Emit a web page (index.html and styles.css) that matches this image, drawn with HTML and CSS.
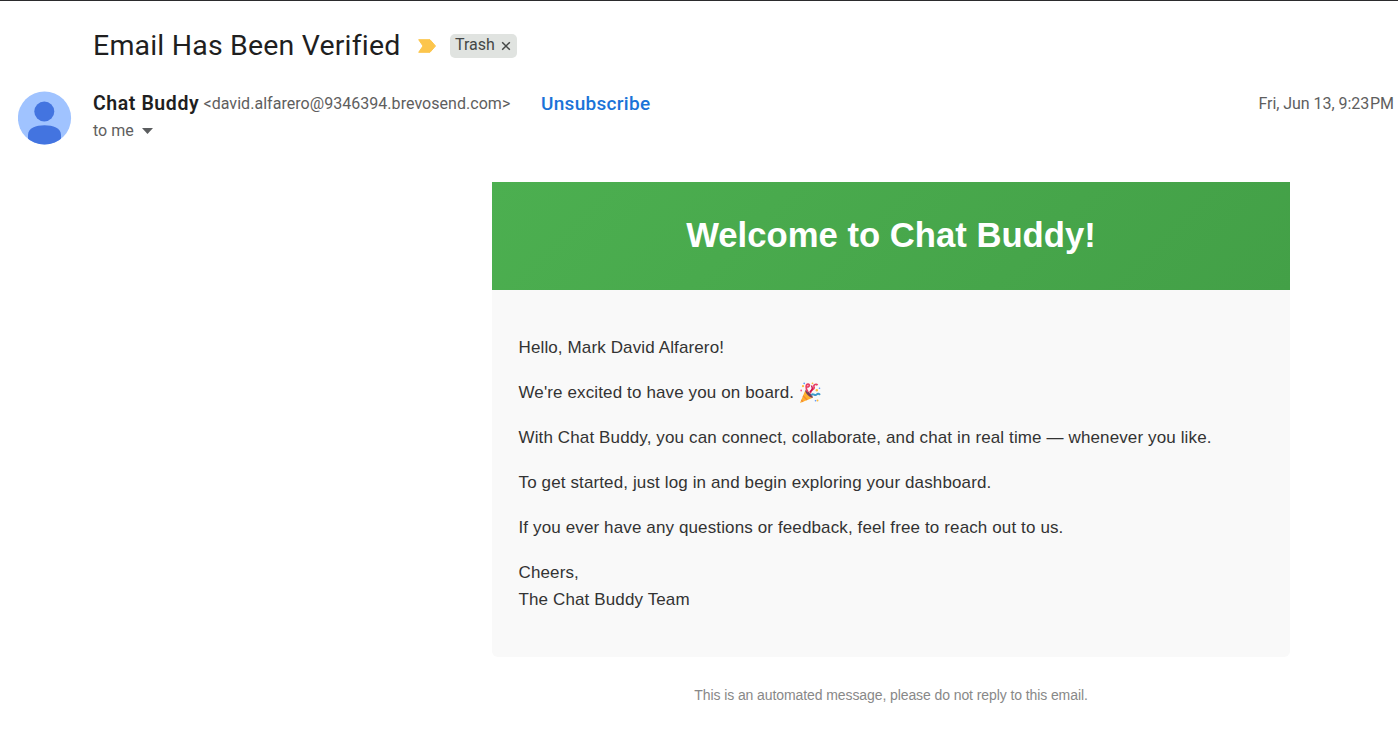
FILE: index.html
```
<!DOCTYPE html>
<html lang="en">
<head>
<meta charset="utf-8">
<title>Email Has Been Verified</title>
<link rel="stylesheet" href="styles.css">
</head>
<body>
<main class="mail">
  <header class="subject">
    <h1 class="subject-title">Email Has Been Verified</h1>
    <svg class="important" width="18" height="14" viewBox="0 0 18 14"><path d="M.7.7H12L17.5 7 12 13.3H.7L5 7Z" fill="#fcc54c" stroke="#fcc54c" stroke-width="1" stroke-linejoin="round"/></svg>
    <span class="label"><span class="label-name">Trash</span>
      <svg width="10" height="10" viewBox="0 0 10 10"><path d="M1.2 1.2 8.8 8.8M8.8 1.2 1.2 8.8" stroke="#444746" stroke-width="1.5"/></svg>
    </span>
  </header>
  <section class="sender">
    <svg class="avatar" width="54" height="54" viewBox="0 0 54 54">
      <defs><clipPath id="disc"><circle cx="26.5" cy="27" r="26.6"/></clipPath></defs>
      <circle cx="26.5" cy="27" r="26.6" fill="#a0c3ff"/>
      <g clip-path="url(#disc)" fill="#4374e0"><circle cx="26.3" cy="20.5" r="10"/><path d="M10 54V44C10 37 18 34.3 26.5 34.3S43 37 43 44V54Z"/></g>
    </svg>
    <div class="who">
      <div class="from">
        <span class="name">Chat Buddy</span>
        <span class="address">&lt;david.alfarero@9346394.brevosend.com&gt;</span>
        <a class="unsubscribe">Unsubscribe</a>
      </div>
      <div class="to"><span>to me</span><svg width="11" height="6" viewBox="0 0 11 6"><path d="M0 0H11L5.5 6Z" fill="#5b5d5f"/></svg></div>
    </div>
    <time class="date">Fri, Jun 13, 9:23<span class="thin"> </span>PM</time>
  </section>
  <article class="message">
    <h2 class="banner">Welcome to Chat Buddy!</h2>
    <div class="body">
      <p>Hello, Mark David Alfarero!</p>
      <p>We're excited to have you on board.<svg class="party" width="22" height="22" viewBox="0 0 22 22">
        <path d="M1 21 6.3 8.3 13.8 15.8Z" fill="#ffb02e"/>
        <path d="M2.3 18 4 19.7M4 13.8 8.2 18" stroke="#f58a35" stroke-width="1.3"/>
        <path d="M6.3 8.3C8 7.5 14.6 14 13.8 15.8 11.5 16.5 5.6 11 6.3 8.3Z" fill="#73405e"/>
        <path d="M9 10C6 6 7 2 9.2 2.2 12 2.6 9.2 6 8 4.6M11.5 11.5C10.5 7 16.5 8 15 4.5 14.2 2.5 17.5 1.5 18.5 3.2" fill="none" stroke="#e83f64" stroke-width="1.7"/>
        <path d="M12.5 13.3C14 10.2 15.7 14.6 17.8 12.4 18.7 11.3 20 11.5 21 12.8" fill="none" stroke="#3e9bc9" stroke-width="2"/>
        <path d="M10.7 9.8C14 8.5 13.5 5.5 12.5 3.5" fill="none" stroke="#ca0b4a" stroke-width="1.4"/>
        <g fill="#ffbd3d"><circle cx="4" cy="4.2" r="1.1"/><circle cx="17.8" cy="8.3" r="1.2"/><circle cx="13.5" cy="1.3" r=".9"/><circle cx="18.5" cy="18.5" r="1"/></g>
        <g fill="#5092ff"><circle cx="5.2" cy="1.4" r=".8"/><circle cx="20.5" cy="6.2" r=".8"/><circle cx="16.5" cy="18.7" r=".8"/></g>
        <circle cx="2.2" cy="8.5" r=".9" fill="#f25b89"/>
      </svg></p>
      <p>With Chat Buddy, you can connect, collaborate, and chat in real time — whenever you like.</p>
      <p>To get started, just log in and begin exploring your dashboard.</p>
      <p>If you ever have any questions or feedback, feel free to reach out to us.</p>
      <p>Cheers,<br>The Chat Buddy Team</p>
    </div>
    <p class="note">This is an automated message, please do not reply to this email.</p>
  </article>
</main>
</body>
</html>
```
FILE: styles.css
```
* { box-sizing: border-box; }
body { margin: 0; background: #fff; font-family: Roboto, sans-serif; }
.mail { height: 738px; overflow: hidden; border-top: 1px solid #2b2b2d; }
.subject { display: flex; align-items: center; height: 88px; padding-left: 93px; }
.subject-title { margin: 0; padding-top: 2px; font: 400 28.5px/36px Roboto, sans-serif; letter-spacing: .18px; color: #1f1f1f; width: 325px; white-space: nowrap; }
.important { margin-right: 14px; margin-top: 1px; }
.label { display: flex; align-items: center; gap: 6px; width: 67px; height: 24px; margin-top: 1px; padding-left: 5px; border-radius: 5px; background: #e0e3e0; color: #444746; font-size: 16px; line-height: 20px; }
.label-name { margin-bottom: 1px; }
.label svg { margin-top: 1px; }
.sender { display: flex; height: 93px; padding: 1px 4px 0 18px; }
.avatar { margin-top: 1px; }
.who { margin-left: 21px; flex: 1; white-space: nowrap; }
.from { display: flex; align-items: center; height: 27px; }
.name { width: 110.5px; font-size: 19.5px; font-weight: 600; letter-spacing: .58px; color: #1f1f1f; }
.address { width: 337.5px; font-size: 16px; letter-spacing: .04px; color: #5e5e5e; }
.unsubscribe { font-size: 19px; font-weight: 500; letter-spacing: .3px; color: #1a73d8; }
.to { display: flex; align-items: center; gap: 8px; height: 27px; font-size: 16px; color: #5e5e5e; }
.date { font-size: 16px; line-height: 27px; color: #5e5e5e; letter-spacing: -.05px; }
.thin { word-spacing: -3px; }
.message { width: 798px; margin-left: 492px; font-family: "Liberation Sans", Arial, sans-serif; }
.banner { height: 108px; margin: 0; background: linear-gradient(135deg, #4caf50, #43a047); color: #fff; font-size: 34.67px; line-height: 107px; text-align: center; }
.body { height: 367px; padding: 44px 26.5px 0; border-radius: 0 0 6px 6px; background: #f9f9f9; color: #333; font-size: 17px; line-height: 27px; letter-spacing: .125px; white-space: nowrap; }
.body p { margin: 0 0 18px; }
.party { margin: -5px 0 -6px 5px; vertical-align: baseline; }
.note { margin: 27px 0 0; color: #888; font-size: 14px; line-height: 22px; letter-spacing: -.09px; text-align: center; }
```
